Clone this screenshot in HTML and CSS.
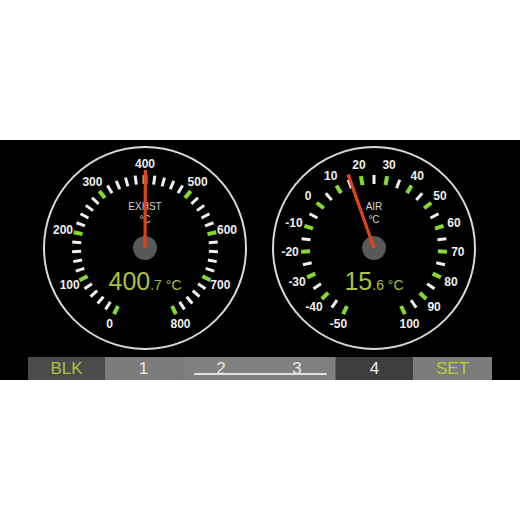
FILE: index.html
```html
<!DOCTYPE html>
<html>
<head>
<meta charset="utf-8">
<link rel="stylesheet" href="styles.css">
</head>
<body>
<div class="page">
  <div class="panel">
    <div class="gauges">
      <svg class="gauge" id="g1" width="210" height="210" viewBox="0 0 210 210">
        <circle class="ring" cx="105" cy="105" r="101"/>
        <g class="scale"></g>
        <text class="title" x="105" y="67">EXHST</text>
        <text class="unit" x="105" y="80">°C</text>
        <text class="value" x="105" y="147"><tspan class="big">400</tspan><tspan class="small">.7 °C</tspan></text>
        <circle class="hub" cx="105" cy="105" r="12"/>
        <line class="needle" x1="105" y1="105" x2="105.4" y2="27"/>
      </svg>
      <svg class="gauge" id="g2" width="210" height="210" viewBox="0 0 210 210">
        <circle class="ring" cx="105" cy="105" r="101"/>
        <g class="scale"></g>
        <text class="title" x="105" y="67">AIR</text>
        <text class="unit" x="105" y="80">°C</text>
        <text class="value" x="105" y="147"><tspan class="big">15</tspan><tspan class="small">.6 °C</tspan></text>
        <circle class="hub" cx="105" cy="105" r="12"/>
        <line class="needle" x1="105" y1="105" x2="79.1" y2="31.4"/>
      </svg>
    </div>
    <div class="bar">
      <div class="seg dark green">BLK</div>
      <div class="seg light">1</div>
      <div class="seg mid pair"><span>2</span><span>3</span><i class="slider"></i></div>
      <div class="seg darker">4</div>
      <div class="seg light green2">SET</div>
    </div>
  </div>
</div>
<script src="script.js"></script>
</body>
</html>
```

FILE: styles.css
```css
html, body {
  margin: 0;
  padding: 0;
  background: #ffffff;
}
.page {
  padding-top: 140px;
  width: 520px;
}
.panel {
  background: #000;
  height: 240px;
  display: flex;
  flex-direction: column;
}
.gauges {
  height: 217px;
  display: flex;
  gap: 19px;
  padding: 3px 0 0 40px;
  box-sizing: border-box;
}
.gauge {
  display: block;
  overflow: visible;
}
.ring {
  fill: none;
  stroke: #d9d9d9;
  stroke-width: 2;
}
.tick {
  stroke: #f0f0f0;
  stroke-width: 3;
}
.tick.major {
  stroke: #86d930;
  stroke-width: 4;
}
.tick.hot {
  stroke: #c2b23a;
  stroke-width: 5;
}
.label {
  fill: #eeeeee;
  font-family: "Liberation Sans", Arial, sans-serif;
  font-weight: bold;
  font-size: 12px;
  text-anchor: middle;
}
.title, .unit {
  fill: #d6d6d6;
  font-family: "Liberation Sans", Arial, sans-serif;
  font-size: 10px;
  text-anchor: middle;
}
.value {
  fill: #a9c23e;
  font-family: "Liberation Sans", Arial, sans-serif;
  text-anchor: middle;
}
.value .big {
  font-size: 25px;
}
.value .small {
  font-size: 14px;
}
.hub {
  fill: #595959;
}
.needle {
  stroke: #e0431b;
  stroke-width: 3.2;
}
.bar {
  height: 23px;
  margin: 0 28px;
  display: grid;
  grid-template-columns: 77px 77px 154px 77px 79px;
  font-family: "Liberation Sans", Arial, sans-serif;
  font-size: 17px;
  line-height: 23px;
  color: #e8e8e8;
}
.seg {
  text-align: center;
}
.dark { background: #4b4b4b; }
.light { background: #7c7c7c; }
.mid { background: #808080; }
.darker { background: #3e3e3e; }
.green { color: #a9c23f; }
.green2 { color: #b4d03b; }
.pair {
  position: relative;
  display: grid;
  grid-template-columns: 1fr 1fr;
  border-left: 1px solid #727272;
  border-right: 1px solid #5e5e5e;
}
.slider {
  position: absolute;
  left: 11px;
  right: 8px;
  top: 16px;
  height: 2px;
  background: #e0e0e0;
  border-radius: 1px;
}
```

FILE: script.js
```javascript
(function () {
  var NS = 'http://www.w3.org/2000/svg';
  function el(tag, attrs, parent) {
    var e = document.createElementNS(NS, tag);
    for (var k in attrs) e.setAttribute(k, attrs[k]);
    parent.appendChild(e);
    return e;
  }
  function build(id, min, max, step, major, hot) {
    var g = document.querySelector('#' + id + ' .scale');
    var c = 105;
    for (var v = min; v <= max + 0.001; v += step) {
      var a = (-155 + 310 * (v - min) / (max - min)) * Math.PI / 180;
      var s = Math.sin(a), co = Math.cos(a);
      var isMajor = Math.abs(((v - min) % major)) < 0.001;
      var cls = 'tick' + (isMajor ? ' major' : '') + (v === hot ? ' hot' : '');
      el('line', {
        'class': cls,
        x1: (c + 64 * s).toFixed(2), y1: (c - 64 * co).toFixed(2),
        x2: (c + 73 * s).toFixed(2), y2: (c - 73 * co).toFixed(2)
      }, g);
      if (isMajor) {
        var t = el('text', {
          'class': 'label',
          x: (c + 84 * s).toFixed(2),
          y: (c - 84 * co + 4).toFixed(2)
        }, g);
        t.textContent = String(v);
      }
    }
  }
  build('g1', 0, 800, 20, 100, 400);
  build('g2', -50, 100, 5, 10, null);
})();
```
